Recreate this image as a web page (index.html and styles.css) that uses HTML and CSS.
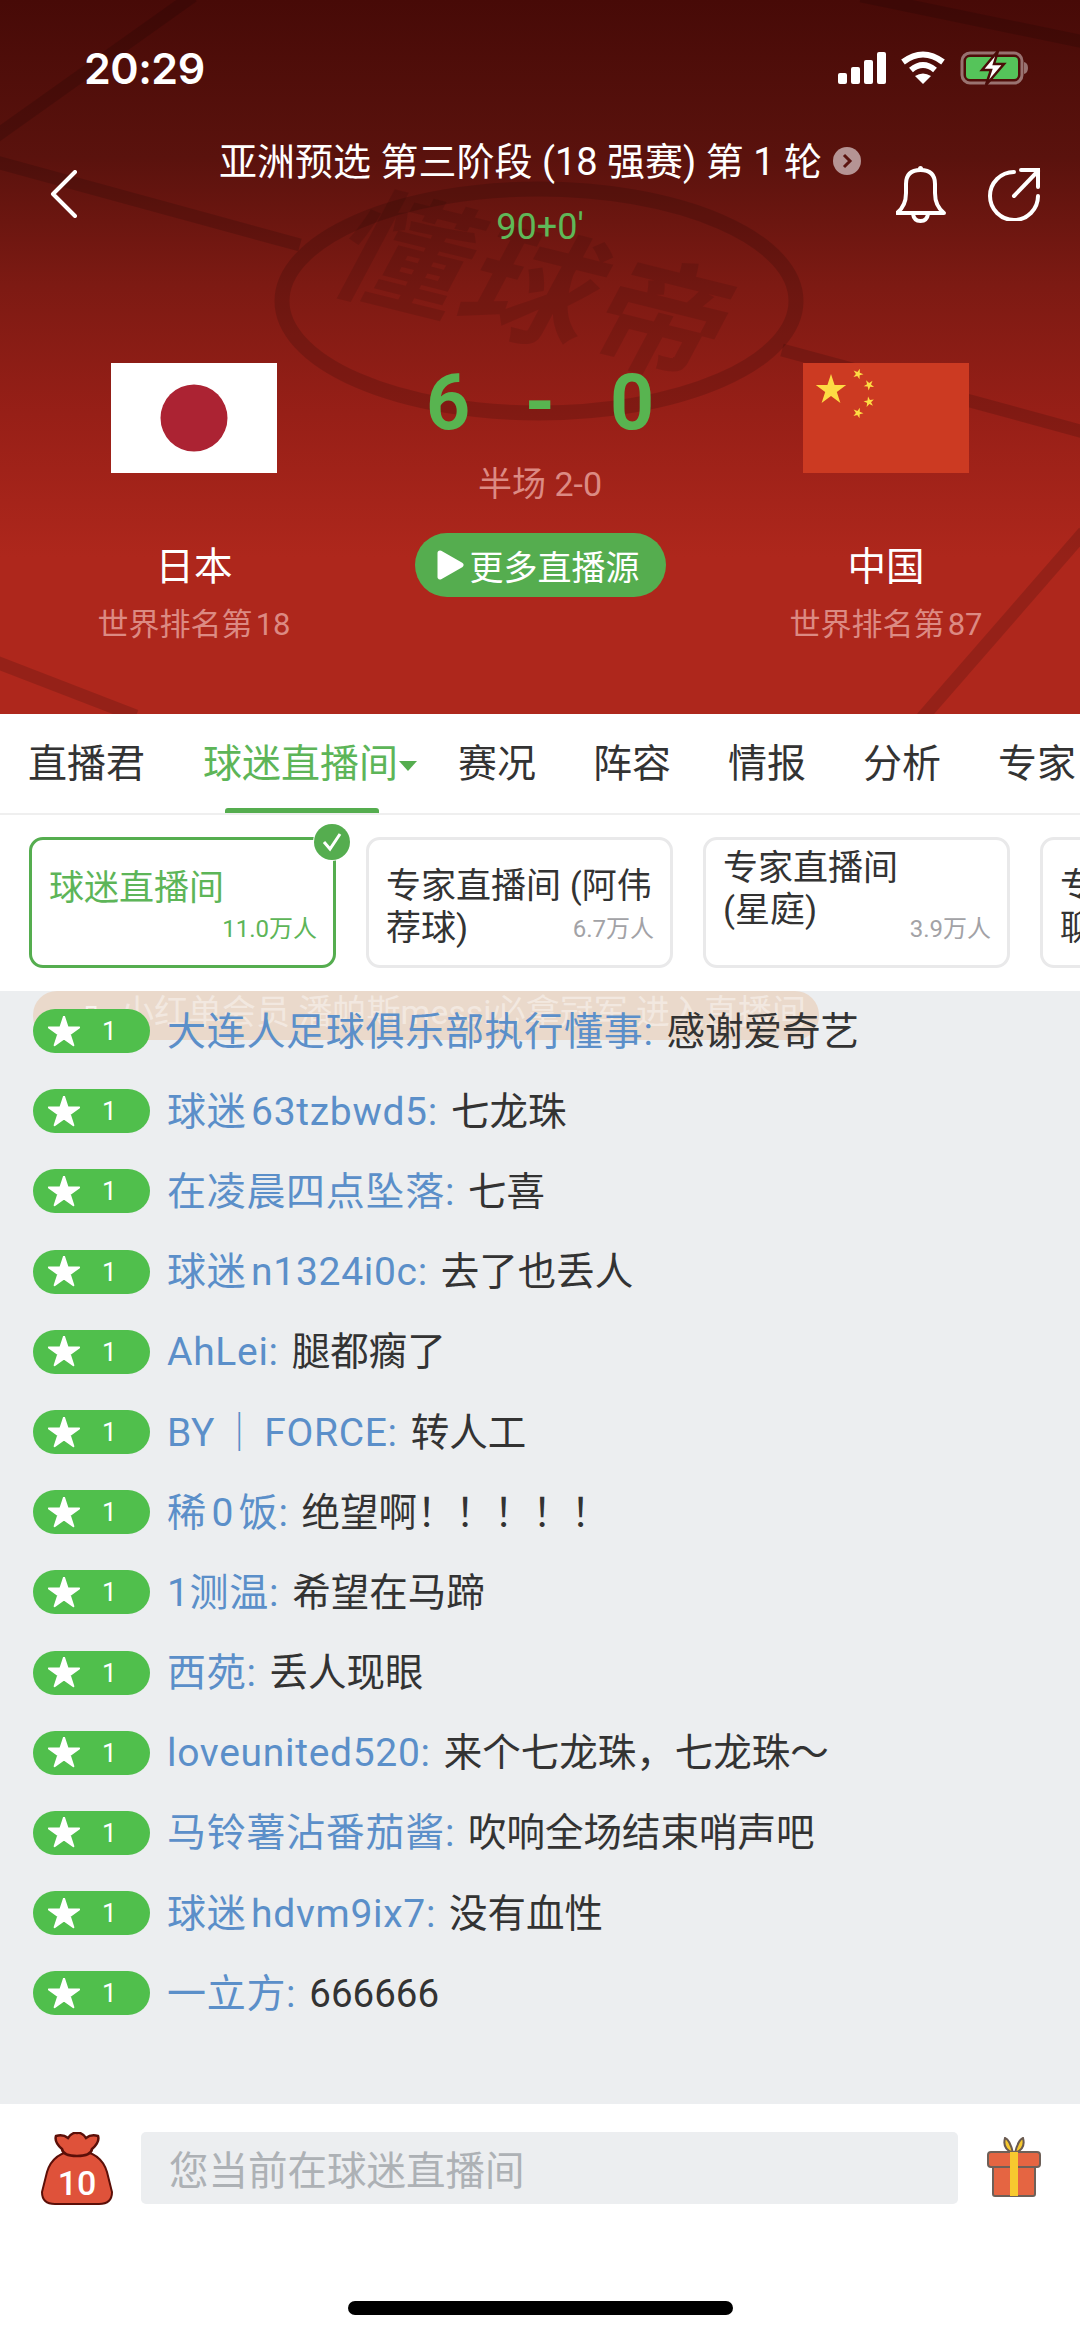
FILE: index.html
```html
<!DOCTYPE html>
<html lang="zh-CN">
<head>
<meta charset="utf-8">
<title>日本 vs 中国</title>
<link rel="stylesheet" href="styles.css">
</head>
<body>
<div class="app">
  <header class="hero">
    <svg class="hero-lines" viewBox="0 0 1080 714" width="1080" height="714" aria-hidden="true">
      <g fill="none" stroke="#000" stroke-opacity=".14" stroke-width="13">
        <path d="M193 -4 L-4 136"/>
        <path d="M-4 162 L300 245"/>
        <path d="M782 350 L1084 432"/>
        <path d="M861 -4 L1084 42"/>
        <path d="M-4 662 L136 716"/>
        <path d="M1084 532 L922 718"/>
        <ellipse cx="539" cy="301" rx="257" ry="112" stroke-width="15"/>
      </g>
    </svg>
    <div class="watermark">懂球帝</div>

    <div class="status">
      <span class="clock">20:29</span>
      <div class="status-icons">
        <svg width="48" height="32" viewBox="0 0 48 32" fill="#fff"><rect x="0" y="21" width="9" height="11" rx="2"/><rect x="13" y="15" width="9" height="17" rx="2"/><rect x="26" y="8" width="9" height="24" rx="2"/><rect x="39" y="0" width="9" height="32" rx="2"/></svg>
        <svg width="46" height="34" viewBox="0 0 46 34" fill="none" stroke="#fff" stroke-width="6"><path d="M3 11 Q23 -4 43 11"/><path d="M11 19 Q23 9 35 19"/><path d="M23 33 L15 25 Q23 20 31 25 Z" fill="#fff" stroke="none"/></svg>
        <svg width="70" height="36" viewBox="0 0 70 36"><rect x="2" y="3" width="60" height="30" rx="8" fill="none" stroke="#fff" stroke-opacity=".42" stroke-width="3"/><rect x="6" y="7" width="52" height="22" rx="4" fill="#55c45a"/><path d="M64 12 q4 1 4 6 t-4 6z" fill="#fff" fill-opacity=".42"/><path d="M38 1 L22 20 L31 20 L26 35 L44 14 L34 14 Z" fill="#fff" stroke="#4a0c08" stroke-width="2.5"/></svg>
      </div>
    </div>

    <div class="nav">
      <div class="nav-back">
        <svg width="28" height="48" viewBox="0 0 28 48" fill="none" stroke="#fff" stroke-width="4" stroke-linecap="round" stroke-linejoin="round"><path d="M25 2 L3 24 L25 46"/></svg>
      </div>
      <div class="nav-center">
        <div class="league">
          <span>亚洲预选 第三阶段 (18 强赛) 第 1 轮</span>
          <svg class="league-go" width="28" height="28" viewBox="0 0 28 28"><circle cx="14" cy="14" r="14" fill="#b59494"/><path d="M11 8 L17 14 L11 20" fill="none" stroke="#5b1410" stroke-width="3"/></svg>
        </div>
        <div class="minute">90+0'</div>
      </div>
      <div class="nav-actions">
        <svg width="50" height="58" viewBox="0 0 50 58" fill="none" stroke="#fff" stroke-width="4"><path d="M1 48 L48 48 Q39 41 39 28 L39 19 Q39 5 24.500 5 Q10 5 10 19 L10 28 Q10 41 1 48 Z" stroke-linejoin="round"/><circle cx="24.500" cy="3.500" r="2.500" fill="#fff" stroke="none"/><path d="M17 49 Q18 56 24.500 56 Q31 56 32 49"/></svg>
        <svg width="54" height="54" viewBox="0 0 54 54" fill="none" stroke="#fff" stroke-width="4" stroke-linecap="round"><path d="M27 5 A24 24 0 1 0 51 29"/><path d="M27 29 L51 4"/><path d="M34 3 L51 3 L51 20"/></svg>
      </div>
    </div>

    <div class="match">
      <div class="team">
        <svg class="flag" width="166" height="110" viewBox="0 0 166 110"><rect width="166" height="110" fill="#fff"/><circle cx="83" cy="55" r="33.500" fill="#ac2333"/></svg>
        <div class="team-name">日本</div>
        <div class="team-rank">世界排名第&#8202;18</div>
      </div>
      <div class="center">
        <div class="score"><span>6</span><span>-</span><span>0</span></div>
        <div class="half">半场 2-0</div>
        <div class="more">
          <svg width="27" height="30" viewBox="0 0 27 30"><path d="M3 3 L24 15 L3 27 Z" fill="#fff" stroke="#fff" stroke-width="5" stroke-linejoin="round"/></svg>
          <span>更多直播源</span>
        </div>
      </div>
      <div class="team">
        <svg class="flag" width="166" height="110" viewBox="0 0 166 110">
          <defs><polygon id="s" points="0,-1 .225,-.309 .951,-.309 .363,.118 .588,.809 0,.382 -.588,.809 -.363,.118 -.951,-.309 -.225,-.309"/></defs>
          <rect width="166" height="110" fill="#cc3a22"/>
          <g fill="#fddc44">
            <use href="#s" transform="translate(28 27) scale(16)"/>
            <use href="#s" transform="translate(55 11) scale(5.500) rotate(20)"/>
            <use href="#s" transform="translate(66 22) scale(5.500) rotate(40)"/>
            <use href="#s" transform="translate(66 39) scale(5.500) rotate(-10)"/>
            <use href="#s" transform="translate(55 50) scale(5.500) rotate(20)"/>
          </g>
        </svg>
        <div class="team-name">中国</div>
        <div class="team-rank">世界排名第&#8202;87</div>
      </div>
    </div>
  </header>

  <nav class="tabs">
    <span class="tab">直播君</span>
    <span class="tab tab-active">球迷直播间<i class="caret"></i></span>
    <span class="tab">赛况</span>
    <span class="tab">阵容</span>
    <span class="tab">情报</span>
    <span class="tab">分析</span>
    <span class="tab">专家</span>
  </nav>

  <section class="chips">
    <div class="chip chip-on chip-single">
      <div class="chip-title">球迷直播间</div>
      <div class="chip-count">11.0万人</div>
      <svg class="chip-check" width="38" height="38" viewBox="0 0 38 38"><circle cx="19" cy="19" r="18" fill="#55ad4f"/><path d="M11 19 L17 26 L27 11" fill="none" stroke="#fff" stroke-width="3"/></svg>
    </div>
    <div class="chip chip-low">
      <div class="chip-title">专家直播间 (阿伟<br>荐球)</div>
      <div class="chip-count">6.7万人</div>
    </div>
    <div class="chip chip-high">
      <div class="chip-title">专家直播间<br>(星庭)</div>
      <div class="chip-count">3.9万人</div>
    </div>
    <div class="chip chip-low">
      <div class="chip-title">专家<br>聊球</div>
    </div>
  </section>

  <section class="chat">
    <div class="ghost">
      <span class="ghost-mark">月</span>
      <span>小红单会员 潘帕斯messi必拿冠军 进入直播间</span>
    </div>
    <div class="row"><span class="lv"><svg width="32" height="31" viewBox="-1 -1 2 1.900"><polygon points="0,-1 .225,-.309 .951,-.309 .363,.118 .588,.809 0,.382 -.588,.809 -.363,.118 -.951,-.309 -.225,-.309" fill="#fff" stroke="#fff" stroke-width=".12" stroke-linejoin="round"/></svg><b>1</b></span><span class="name">大连人足球俱乐部执行懂事:</span><span class="msg">感谢爱奇艺</span></div>
    <div class="row"><span class="lv"><svg width="32" height="31" viewBox="-1 -1 2 1.900"><polygon points="0,-1 .225,-.309 .951,-.309 .363,.118 .588,.809 0,.382 -.588,.809 -.363,.118 -.951,-.309 -.225,-.309" fill="#fff" stroke="#fff" stroke-width=".12" stroke-linejoin="round"/></svg><b>1</b></span><span class="name">球迷&#8202;63tzbwd5:</span><span class="msg">七龙珠</span></div>
    <div class="row"><span class="lv"><svg width="32" height="31" viewBox="-1 -1 2 1.900"><polygon points="0,-1 .225,-.309 .951,-.309 .363,.118 .588,.809 0,.382 -.588,.809 -.363,.118 -.951,-.309 -.225,-.309" fill="#fff" stroke="#fff" stroke-width=".12" stroke-linejoin="round"/></svg><b>1</b></span><span class="name">在凌晨四点坠落:</span><span class="msg">七喜</span></div>
    <div class="row"><span class="lv"><svg width="32" height="31" viewBox="-1 -1 2 1.900"><polygon points="0,-1 .225,-.309 .951,-.309 .363,.118 .588,.809 0,.382 -.588,.809 -.363,.118 -.951,-.309 -.225,-.309" fill="#fff" stroke="#fff" stroke-width=".12" stroke-linejoin="round"/></svg><b>1</b></span><span class="name">球迷&#8202;n1324i0c:</span><span class="msg">去了也丢人</span></div>
    <div class="row"><span class="lv"><svg width="32" height="31" viewBox="-1 -1 2 1.900"><polygon points="0,-1 .225,-.309 .951,-.309 .363,.118 .588,.809 0,.382 -.588,.809 -.363,.118 -.951,-.309 -.225,-.309" fill="#fff" stroke="#fff" stroke-width=".12" stroke-linejoin="round"/></svg><b>1</b></span><span class="name">AhLei:</span><span class="msg">腿都瘸了</span></div>
    <div class="row"><span class="lv"><svg width="32" height="31" viewBox="-1 -1 2 1.900"><polygon points="0,-1 .225,-.309 .951,-.309 .363,.118 .588,.809 0,.382 -.588,.809 -.363,.118 -.951,-.309 -.225,-.309" fill="#fff" stroke="#fff" stroke-width=".12" stroke-linejoin="round"/></svg><b>1</b></span><span class="name">BY&#8202;｜&#8202;FORCE:</span><span class="msg">转人工</span></div>
    <div class="row"><span class="lv"><svg width="32" height="31" viewBox="-1 -1 2 1.900"><polygon points="0,-1 .225,-.309 .951,-.309 .363,.118 .588,.809 0,.382 -.588,.809 -.363,.118 -.951,-.309 -.225,-.309" fill="#fff" stroke="#fff" stroke-width=".12" stroke-linejoin="round"/></svg><b>1</b></span><span class="name">稀&#8202;0&#8202;饭:</span><span class="msg">绝望啊！！！！！</span></div>
    <div class="row"><span class="lv"><svg width="32" height="31" viewBox="-1 -1 2 1.900"><polygon points="0,-1 .225,-.309 .951,-.309 .363,.118 .588,.809 0,.382 -.588,.809 -.363,.118 -.951,-.309 -.225,-.309" fill="#fff" stroke="#fff" stroke-width=".12" stroke-linejoin="round"/></svg><b>1</b></span><span class="name">1测温:</span><span class="msg">希望在马蹄</span></div>
    <div class="row"><span class="lv"><svg width="32" height="31" viewBox="-1 -1 2 1.900"><polygon points="0,-1 .225,-.309 .951,-.309 .363,.118 .588,.809 0,.382 -.588,.809 -.363,.118 -.951,-.309 -.225,-.309" fill="#fff" stroke="#fff" stroke-width=".12" stroke-linejoin="round"/></svg><b>1</b></span><span class="name">西苑:</span><span class="msg">丢人现眼</span></div>
    <div class="row"><span class="lv"><svg width="32" height="31" viewBox="-1 -1 2 1.900"><polygon points="0,-1 .225,-.309 .951,-.309 .363,.118 .588,.809 0,.382 -.588,.809 -.363,.118 -.951,-.309 -.225,-.309" fill="#fff" stroke="#fff" stroke-width=".12" stroke-linejoin="round"/></svg><b>1</b></span><span class="name">loveunited520:</span><span class="msg">来个七龙珠，七龙珠～</span></div>
    <div class="row"><span class="lv"><svg width="32" height="31" viewBox="-1 -1 2 1.900"><polygon points="0,-1 .225,-.309 .951,-.309 .363,.118 .588,.809 0,.382 -.588,.809 -.363,.118 -.951,-.309 -.225,-.309" fill="#fff" stroke="#fff" stroke-width=".12" stroke-linejoin="round"/></svg><b>1</b></span><span class="name">马铃薯沾番茄酱:</span><span class="msg">吹响全场结束哨声吧</span></div>
    <div class="row"><span class="lv"><svg width="32" height="31" viewBox="-1 -1 2 1.900"><polygon points="0,-1 .225,-.309 .951,-.309 .363,.118 .588,.809 0,.382 -.588,.809 -.363,.118 -.951,-.309 -.225,-.309" fill="#fff" stroke="#fff" stroke-width=".12" stroke-linejoin="round"/></svg><b>1</b></span><span class="name">球迷&#8202;hdvm9ix7:</span><span class="msg">没有血性</span></div>
    <div class="row"><span class="lv"><svg width="32" height="31" viewBox="-1 -1 2 1.900"><polygon points="0,-1 .225,-.309 .951,-.309 .363,.118 .588,.809 0,.382 -.588,.809 -.363,.118 -.951,-.309 -.225,-.309" fill="#fff" stroke="#fff" stroke-width=".12" stroke-linejoin="round"/></svg><b>1</b></span><span class="name">一立方:</span><span class="msg">666666</span></div>
  </section>

  <footer class="bottom">
    <div class="composer">
      <svg width="72" height="73" viewBox="0 0 72 73">
        <path d="M36 18 Q12 20 6 40 L1 60 Q1 72 14 72 L58 72 Q71 72 71 60 L66 40 Q60 20 36 18 Z" fill="#df523a" stroke="#5b0f08" stroke-width="2"/>
        <path d="M36 24 Q22 24 21 17 Q13 10 15 4 Q22 2 27 6 Q31 0 36 1 Q41 0 45 6 Q50 2 57 4 Q59 10 51 17 Q50 24 36 24 Z" fill="#df523a" stroke="#5b0f08" stroke-width="2.500"/>
        <text class="bag-num" x="36" y="63" text-anchor="middle">10</text>
      </svg>
      <div class="input">您当前在球迷直播间</div>
      <svg width="56" height="60" viewBox="0 0 56 60">
        <path d="M27 16 Q16 12 19 1 Q24 3 27 16 Z M29 16 Q40 12 37 1 Q32 3 29 16 Z" fill="#f7c92f" stroke="#6a5a50" stroke-width="2"/>
        <path d="M7 28 L49 28 L49 57 Q49 59 47 59 L9 59 Q7 59 7 57 Z" fill="#e56542" stroke="#6e6058" stroke-width="2"/>
        <rect x="2" y="15" width="52" height="15" rx="3" fill="#e56542" stroke="#6e6058" stroke-width="2"/>
        <rect x="24" y="15" width="8" height="44" fill="#f7c92f"/>
      </svg>
    </div>
    <div class="home-bar"></div>
  </footer>
</div>
</body>
</html>
```

FILE: styles.css
```css
* { box-sizing: border-box; }
html, body { margin: 0; padding: 0; background: #fff; }
body { font-family: Roboto, "Noto Sans CJK SC", sans-serif; color: #333; }
.app { width: 1080px; height: 2337px; display: flex; flex-direction: column; overflow: hidden; }

/* header */
.hero {
  position: relative;
  height: 714px;
  flex: none;
  overflow: hidden;
  color: #fff;
  background: linear-gradient(180deg, #470a07 0%, #5a120d 22%, #7d1a13 40%, #971f17 58%, #ae271c 78%, #ae271c 100%);
}
.hero-lines { position: absolute; left: 0; top: 0; }
.watermark {
  position: absolute;
  left: 338px;
  top: 216px;
  font-size: 128px;
  line-height: 150px;
  font-weight: 700;
  letter-spacing: 4px;
  color: rgba(0, 0, 0, .1);
  transform: rotate(14deg) skewX(-14deg);
  white-space: nowrap;
}
.status, .nav, .match { position: relative; }

.status {
  margin-top: 45px;
  height: 46px;
  padding: 0 50px 0 84px;
  display: flex;
  justify-content: space-between;
  align-items: center;
}
.clock { font-family: Inter, sans-serif; font-size: 43px; font-weight: 600; letter-spacing: -.5px; }
.status-icons { display: flex; align-items: center; gap: 14px; }

.nav {
  margin-top: 49px;
  height: 105px;
  display: grid;
  grid-template-columns: 1fr auto 1fr;
}
.nav-back { padding-left: 50px; display: flex; align-items: center; }
.nav-center { display: flex; flex-direction: column; align-items: center; }
.league { display: flex; align-items: center; gap: 11px; font-size: 38px; line-height: 44px; white-space: nowrap; }
.league-go { flex: none; margin-top: -2px; }
.minute { margin-top: 22px; font-size: 36px; line-height: 42px; color: #5fb858; }
.nav-actions { display: flex; justify-content: flex-end; align-items: center; gap: 41px; padding-right: 39px; }

.match {
  margin-top: 118px;
  display: grid;
  grid-template-columns: 388px 304px 388px;
}
.team { display: flex; flex-direction: column; align-items: center; }
.flag { display: block; }
.team-name { margin-top: 71px; font-size: 38.5px; line-height: 46px; }
.team-rank { margin-top: 15px; font-size: 31px; line-height: 40px; color: #dc8a83; white-space: nowrap; }

.center { display: flex; flex-direction: column; align-items: center; }
.score { display: flex; height: 80px; align-items: center; font-size: 77px; font-weight: 700; color: #58b450; }
.score span { width: 92px; text-align: center; }
.half { margin-top: 21px; font-size: 34px; line-height: 40px; color: #dc8a83; white-space: nowrap; }
.more {
  margin-top: 29px;
  width: 251px;
  height: 64px;
  border-radius: 32px;
  background: #55ad4f;
  display: flex;
  align-items: center;
  gap: 6px;
  padding-left: 22px;
  font-size: 34px;
  white-space: nowrap;
}

/* tabs */
.tabs {
  flex: none;
  height: 101px;
  display: flex;
  align-items: center;
  gap: 57px;
  padding: 0 0 0 28px;
  border-bottom: 2px solid #efefef;
  font-size: 39px;
  color: #333;
  white-space: nowrap;
}
.tab { flex: none; position: relative; line-height: 46px; }
.tab-active { color: #5db558; margin: 0 3px 0 1px; }
.tab-active::after {
  content: "";
  position: absolute;
  left: 22px;
  top: 67.5px;
  width: 154px;
  height: 5px;
  border-radius: 3px 3px 0 0;
  background: #55ad4f;
}
.caret {
  position: absolute;
  right: -19px;
  top: 20px;
  border-left: 9px solid transparent;
  border-right: 9px solid transparent;
  border-top: 10px solid #55ad4f;
}

/* chips */
.chips {
  flex: none;
  height: 176px;
  display: flex;
  gap: 30px;
  padding: 22px 0 0 29px;
  overflow: hidden;
  background: #fff;
}
.chip {
  flex: none;
  position: relative;
  width: 307px;
  height: 131px;
  border: 3px solid #e9e9ea;
  border-radius: 14px;
  padding: 0 17px;
  font-size: 35px;
  line-height: 42px;
  color: #333;
}
.chip-on { border-color: #55ad4f; color: #5db558; }
.chip-single { padding-top: 28px; }
.chip-low { padding-top: 26px; }
.chip-high { padding-top: 8px; }
.chip-count {
  position: absolute;
  right: 16px;
  bottom: 21px;
  font-size: 24px;
  line-height: 30px;
  color: #a2a2a6;
}
.chip-on .chip-count { color: #5db558; }
.chip-check {
  position: absolute;
  right: -18px;
  top: -17px;
  background: #fff;
  border-radius: 50%;
}

/* chat */
.chat {
  position: relative;
  flex: none;
  height: 1113px;
  background: #eceef0;
  overflow: hidden;
  display: grid;
  grid-auto-rows: 80.2px;
  align-content: start;
}
.ghost {
  position: absolute;
  left: 33px;
  top: 0;
  width: 786px;
  height: 49px;
  padding-left: 87px;
  border-radius: 24px;
  background: #ead9cb;
  color: rgba(255, 255, 255, .42);
  font-size: 34px;
  line-height: 42px;
  white-space: nowrap;
}
.ghost-mark {
  position: absolute;
  left: 50px;
  top: 14px;
  font-size: 16px;
  line-height: 18px;
  font-weight: 700;
  color: rgba(255, 255, 255, .7);
}
.row {
  position: relative;
  display: flex;
  align-items: center;
  padding-left: 33px;
  font-size: 38.5px;
  line-height: 50px;
  white-space: nowrap;
}
.lv {
  flex: none;
  width: 117px;
  height: 44px;
  border-radius: 22px;
  background: #50bf4c;
  display: flex;
  align-items: center;
  padding-left: 15px;
  margin-right: 17px;
  color: #fff;
}
.row:first-of-type .lv { background: rgba(80, 191, 76, .93); }
.lv svg { flex: none; }
.lv b { margin-left: 22px; font-size: 26px; font-weight: 400; }
.name { color: #5b8fc9; margin-right: 13px; font-size: 39px; letter-spacing: .7px; padding-top: 1px; }
.msg { color: #333; padding-top: 1px; }

/* bottom */
.bottom { flex: 1; position: relative; background: #fff; }
.composer {
  display: flex;
  align-items: flex-start;
  padding: 28px 0 0 41px;
  gap: 28px;
}
.input {
  width: 817px;
  height: 72px;
  border-radius: 5px;
  background: #eceef0;
  color: #adb1b5;
  font-size: 39.5px;
  line-height: 72px;
  padding: 4px 0 0 28px;
  white-space: nowrap;
}
.bag-num { font-family: Roboto, sans-serif; font-size: 34px; font-weight: 500; fill: #fff; }
.composer svg:last-child { margin-top: 5px; }
.home-bar {
  position: absolute;
  left: 348px;
  top: 197px;
  width: 385px;
  height: 14px;
  border-radius: 7px;
  background: #000;
}
```
